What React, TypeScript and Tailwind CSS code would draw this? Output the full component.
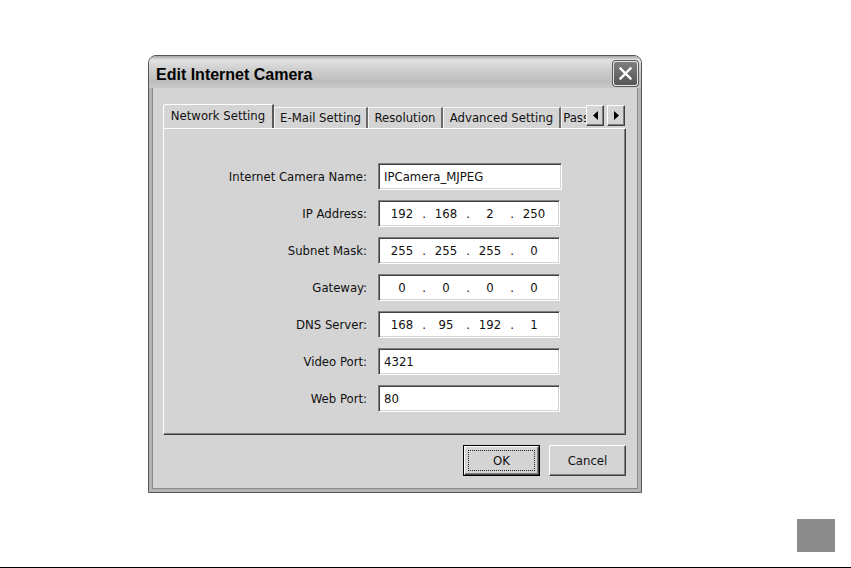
import React from "react";

const rows: { label: string; kind: "text" | "ip"; value: string | string[]; w: string }[] = [
  { label: "Internet Camera Name:", kind: "text", value: "IPCamera_MJPEG", w: "w-[184px]" },
  { label: "IP Address:", kind: "ip", value: ["192", "168", "2", "250"], w: "w-[182px]" },
  { label: "Subnet Mask:", kind: "ip", value: ["255", "255", "255", "0"], w: "w-[182px]" },
  { label: "Gateway:", kind: "ip", value: ["0", "0", "0", "0"], w: "w-[182px]" },
  { label: "DNS Server:", kind: "ip", value: ["168", "95", "192", "1"], w: "w-[182px]" },
  { label: "Video Port:", kind: "text", value: "4321", w: "w-[182px]" },
  { label: "Web Port:", kind: "text", value: "80", w: "w-[182px]" },
];

const tabs = [
  { label: "E-Mail Setting", w: "w-[94px]" },
  { label: "Resolution", w: "w-[75px]" },
  { label: "Advanced Setting", w: "w-[118px]" },
  { label: "Password", w: "w-[60px]" },
];

function Sunken({ w, children }: { w: string; children: React.ReactNode }) {
  return (
    <div
      className={`${w} h-[27px] bg-white border border-t-[#808080] border-l-[#808080] border-r-white border-b-white shadow-[inset_1px_1px_0_#404040,inset_-1px_-1px_0_#d4d4d4] flex items-center`}
    >
      {children}
    </div>
  );
}

function ArrowBtn({ dir }: { dir: "l" | "r" }) {
  return (
    <div className="w-[18px] h-[21px] bg-[#d4d4d4] border border-t-white border-l-white border-r-[#404040] border-b-[#404040] shadow-[inset_-1px_-1px_0_#808080] flex items-center justify-center">
      <svg width="5" height="9" viewBox="0 0 5 9">
        {dir === "l" ? <path d="M5 0 L0 4.5 L5 9 Z" fill="#000" /> : <path d="M0 0 L5 4.5 L0 9 Z" fill="#000" />}
      </svg>
    </div>
  );
}

export default function App() {
  return (
    <div className="w-[851px] h-[568px] bg-white flex flex-col overflow-hidden font-['DejaVu_Sans_Condensed','Liberation_Sans',sans-serif] text-[13px] text-[#111]">
      {/* Dialog */}
      <div className="ml-[148px] mt-[55px] w-[494px] h-[438px] flex flex-col rounded-t-[8px] border border-[#555] bg-[#d4d4d4] overflow-hidden">
        {/* Title bar */}
        <div className="h-[32px] flex items-center justify-between pl-[7px] pr-[3px] bg-[linear-gradient(to_bottom,#a4a4a4_0%,#e2e2e2_12%,#cdcdcd_45%,#bdbdbd_80%,#c9c9c9_100%)]">
          <span className="font-['Liberation_Sans',sans-serif] font-bold text-[16px] text-black pt-[5px]">
            Edit Internet Camera
          </span>
          <div className="w-[25px] h-[25px] mt-[3px] rounded-[3px] border border-[#e6e6e6] bg-[linear-gradient(to_bottom,#7e7e7e,#575757)] flex items-center justify-center shadow-[0_0_0_1px_#5a5a5a]">
            <svg width="15" height="15" viewBox="0 0 15 15">
              <path d="M2.5 2.5 L12.5 12.5 M12.5 2.5 L2.5 12.5" stroke="#fff" strokeWidth="2.4" strokeLinecap="square" />
            </svg>
          </div>
        </div>

        {/* Body */}
        <div className="flex-1 flex flex-col border-x-[3px] border-b-[3px] border-[#b4b4b4] shadow-[inset_1px_0_0_#8a8a8a,inset_-1px_0_0_#8a8a8a,inset_0_-1px_0_#8a8a8a] pl-[11px] pr-[12px] pt-[16px]">
          {/* Tab strip */}
          <div className="h-[24px] flex items-end">
            <div className="w-[423px] h-[25px] flex items-end overflow-hidden">
              <div className="relative z-10 -mb-px w-[111px] h-[25px] shrink-0 bg-[#d4d4d4] border-t border-l border-t-white border-l-white border-r-2 border-r-[#5a5a5a] rounded-tl-[3px] flex items-center justify-center pb-[3px]">
                Network Setting
              </div>
              {tabs.map((t) => (
                <div
                  key={t.label}
                  className={`${t.w} h-[21px] shrink-0 bg-[#d4d4d4] border-t border-l border-t-[#f4f4f4] border-l-[#f4f4f4] border-r-2 border-r-[#6a6a6a] flex items-center justify-center whitespace-nowrap overflow-hidden`}
                >
                  {t.label}
                </div>
              ))}
            </div>
            <div className="flex gap-[3px] self-start mt-[1px]">
              <ArrowBtn dir="l" />
              <ArrowBtn dir="r" />
            </div>
          </div>

          {/* Panel */}
          <div className="h-[307px] bg-[#d4d4d4] border border-t-white border-l-white border-r-[#404040] border-b-[#404040] shadow-[inset_-1px_-1px_0_#808080] pt-[34px] flex flex-col gap-[10px]">
            {rows.map((r) => (
              <div key={r.label} className="flex items-center">
                <div className="w-[203px] text-right">{r.label}</div>
                <div className="ml-[11px]">
                  <Sunken w={r.w}>
                    {r.kind === "text" ? (
                      <span className="pl-[5px]">{r.value as string}</span>
                    ) : (
                      <div className="flex items-center pl-[5px]">
                        {(r.value as string[]).map((v, i) => (
                          <React.Fragment key={i}>
                            {i > 0 && <span className="w-[8px] text-center">.</span>}
                            <span className="w-[36px] text-center">{v}</span>
                          </React.Fragment>
                        ))}
                      </div>
                    )}
                  </Sunken>
                </div>
              </div>
            ))}
          </div>

          {/* Buttons */}
          <div className="mt-[10px] flex justify-end gap-[9px]">
            <div className="w-[77px] h-[31px] border border-black">
              <div className="w-full h-full border border-t-white border-l-white border-r-[#404040] border-b-[#404040] shadow-[inset_-1px_-1px_0_#808080] p-[3px]">
                <div className="w-full h-full border border-dotted border-[#222] flex items-center justify-center">
                  OK
                </div>
              </div>
            </div>
            <div className="w-[77px] h-[31px] border border-t-white border-l-white border-r-[#404040] border-b-[#404040] shadow-[inset_-1px_-1px_0_#808080] flex items-center justify-center">
              Cancel
            </div>
          </div>
        </div>
      </div>

      <div className="flex-1" />
      <div className="flex justify-end pr-[16px] pb-[15px]">
        <div className="w-[38px] h-[33px] bg-[#8c8c8c]" />
      </div>
      <div className="h-px bg-black" />
    </div>
  );
}
